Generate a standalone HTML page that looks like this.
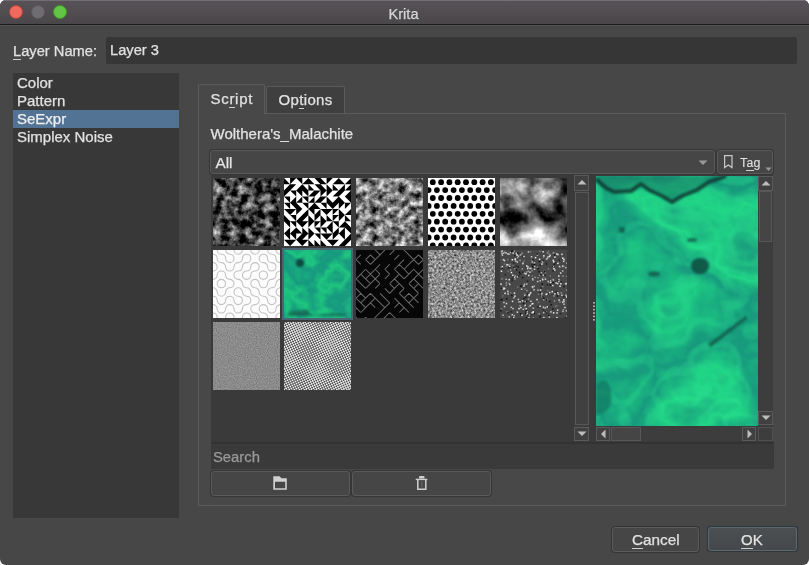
<!DOCTYPE html>
<html><head><meta charset="utf-8">
<style>
*{margin:0;padding:0;box-sizing:border-box}
html,body{width:809px;height:565px;overflow:hidden;background:#fff}
body{font-family:"Liberation Sans",sans-serif;color:#e2e2e2;position:relative}
.a{position:absolute}
#win{will-change:transform;left:0;top:0;width:809px;height:565px;background:#474747;border-radius:6px;overflow:hidden}
#title{left:0;top:0;width:809px;height:25px;background:linear-gradient(#575257,#4a474a);border-bottom:1px solid #1c1c1d;box-shadow:inset 0 1px 0 #726e73,0 1px 0 #515151}
.tl{width:14px;height:14px;border-radius:50%;top:5px}
.t{white-space:nowrap;font-size:15px;line-height:18px;-webkit-text-stroke:0.25px currentColor}
u{text-decoration:none;position:relative}
u:after{content:"";position:absolute;left:0;right:0;bottom:-1px;height:1px;background:#cfcfcf}
.btn{border:1px solid #5a5a5a;border-radius:3px;background:#464646;box-shadow:0 0 0 1px #363636}
.sb{background:#404040;border:1px solid #5a5a5a}
.thumb{width:67px;height:68px}
</style></head><body>
<svg width="0" height="0" style="position:absolute"><defs><filter id="n1" x="0" y="0" width="100%" height="100%" color-interpolation-filters="sRGB"><feTurbulence type="fractalNoise" baseFrequency="0.12" numOctaves="4" seed="3"/><feColorMatrix type="matrix" values="1 0 0 0 0 1 0 0 0 0 1 0 0 0 0 0 0 0 0 1"/><feComponentTransfer><feFuncR type="linear" slope="1.6" intercept="-0.55"/><feFuncG type="linear" slope="1.6" intercept="-0.55"/><feFuncB type="linear" slope="1.6" intercept="-0.55"/></feComponentTransfer></filter><filter id="n3" x="0" y="0" width="100%" height="100%" color-interpolation-filters="sRGB"><feTurbulence type="fractalNoise" baseFrequency="0.14" numOctaves="4" seed="11"/><feColorMatrix type="matrix" values="1 0 0 0 0 1 0 0 0 0 1 0 0 0 0 0 0 0 0 1"/><feComponentTransfer><feFuncR type="linear" slope="1.5" intercept="-0.26"/><feFuncG type="linear" slope="1.5" intercept="-0.26"/><feFuncB type="linear" slope="1.5" intercept="-0.26"/></feComponentTransfer></filter><filter id="n5" x="0" y="0" width="100%" height="100%" color-interpolation-filters="sRGB"><feTurbulence type="fractalNoise" baseFrequency="0.04" numOctaves="5" seed="2"/><feColorMatrix type="matrix" values="1 0 0 0 0 1 0 0 0 0 1 0 0 0 0 0 0 0 0 1"/><feComponentTransfer><feFuncR type="linear" slope="-1.7" intercept="1.33"/><feFuncG type="linear" slope="-1.7" intercept="1.33"/><feFuncB type="linear" slope="-1.7" intercept="1.33"/></feComponentTransfer></filter><filter id="m7" x="0" y="0" width="100%" height="100%" color-interpolation-filters="sRGB">
<feTurbulence type="fractalNoise" baseFrequency="0.03 0.035" numOctaves="4" seed="12"/>
<feColorMatrix type="matrix" values="1 0 0 0 0 1 0 0 0 0 1 0 0 0 0 0 0 0 0 1"/>
<feComponentTransfer><feFuncR type="table" tableValues="0.08 0.09 0.12 0.09 0.1 0.09"/>
<feFuncG type="table" tableValues="0.5 0.6 0.78 0.6 0.68 0.58"/>
<feFuncB type="table" tableValues="0.44 0.5 0.5 0.5 0.5 0.48"/></feComponentTransfer></filter><filter id="n9" x="0" y="0" width="100%" height="100%" color-interpolation-filters="sRGB"><feTurbulence type="fractalNoise" baseFrequency="0.45" numOctaves="3" seed="9"/><feColorMatrix type="matrix" values="1 0 0 0 0 1 0 0 0 0 1 0 0 0 0 0 0 0 0 1"/><feComponentTransfer><feFuncR type="linear" slope="0.9" intercept="0.1"/><feFuncG type="linear" slope="0.9" intercept="0.1"/><feFuncB type="linear" slope="0.9" intercept="0.1"/></feComponentTransfer></filter><filter id="n11" x="0" y="0" width="100%" height="100%" color-interpolation-filters="sRGB"><feTurbulence type="fractalNoise" baseFrequency="0.9" numOctaves="2" seed="4"/><feColorMatrix type="matrix" values="1 0 0 0 0 1 0 0 0 0 1 0 0 0 0 0 0 0 0 1"/><feComponentTransfer><feFuncR type="linear" slope="0.25" intercept="0.42"/><feFuncG type="linear" slope="0.25" intercept="0.42"/><feFuncB type="linear" slope="0.25" intercept="0.42"/></feComponentTransfer></filter><pattern id="p12" width="3.2" height="3.2" patternUnits="userSpaceOnUse" patternTransform="rotate(20)"><rect width="3.2" height="3.2" fill="#f0f0f0"/><rect width="1.6" height="1.6" fill="#505050"/><rect x="1.6" y="1.6" width="1.6" height="1.6" fill="#505050"/></pattern><filter id="mp" x="0" y="0" width="100%" height="100%" color-interpolation-filters="sRGB">
<feTurbulence type="fractalNoise" baseFrequency="0.009 0.011" numOctaves="5" seed="3" result="n"/>
<feColorMatrix in="n" type="matrix" values="1 0 0 0 0 1 0 0 0 0 1 0 0 0 0 0 0 0 0 1" result="g"/>
<feComponentTransfer in="g"><feFuncR type="table" tableValues="0.08 0.1 0.13 0.09 0.12 0.1"/>
<feFuncG type="table" tableValues="0.5 0.62 0.84 0.6 0.8 0.58"/>
<feFuncB type="table" tableValues="0.44 0.49 0.53 0.49 0.52 0.47"/></feComponentTransfer>
</filter>
<filter id="mc" x="0" y="0" width="100%" height="100%" color-interpolation-filters="sRGB">
<feTurbulence type="fractalNoise" baseFrequency="0.009 0.012" numOctaves="3" seed="3" result="n"/>
<feColorMatrix in="n" type="matrix" values="1 0 0 0 0 1 0 0 0 0 1 0 0 0 0 0 0 0 0 1" result="g"/>
<feComponentTransfer in="g"><feFuncR type="discrete" tableValues="0 0 1 0 0 1 0 0 1 0 0 1 0 0 1 0 0 1"/></feComponentTransfer>
<feColorMatrix type="matrix" values="0 0 0 0 0.2  0 0 0 0 0.95  0 0 0 0 0.6  1 0 0 0 -0.5"/>
<feGaussianBlur stdDeviation="0.9"/>
</filter>
<filter id="blur2"><feGaussianBlur stdDeviation="2"/></filter><filter id="blur1"><feGaussianBlur stdDeviation="1.3"/></filter><filter id="blur6"><feGaussianBlur stdDeviation="7"/></filter></defs></svg>
<div id="win" class="a">
  <div id="title" class="a"></div>
  <div class="a tl" style="left:9px;background:#ee6a5f;border:1px solid #b8433b"></div>
  <div class="a tl" style="left:31px;background:#706d72;border:1px solid #5c595e"></div>
  <div class="a tl" style="left:53px;background:#62c545;border:1px solid #3e9a2b"></div>
  <div class="a t" style="left:388.5px;top:4.5px;font-size:14.6px;color:#d6d6d6">Krita</div>

  <div class="a t" style="left:13px;top:41.5px;font-size:14.7px"><u>L</u>ayer Name:</div>
  <div class="a" style="left:106px;top:37px;width:691px;height:27px;background:#363636;border-radius:2px"></div>
  <div class="a t" style="left:110px;top:41px;font-size:14.7px">Layer 3</div>

  <!-- list -->
  <div class="a" style="left:13px;top:73px;width:166px;height:445px;background:#383838"></div>
  <div class="a" style="left:13px;top:110px;width:166px;height:18px;background:#527393"></div>
  <div class="a t" style="left:17px;top:74px;font-size:15px">Color</div>
  <div class="a t" style="left:17px;top:92px;font-size:15px">Pattern</div>
  <div class="a t" style="left:17px;top:110px;font-size:15px;color:#f0f0f0">SeExpr</div>
  <div class="a t" style="left:17px;top:128px;font-size:15px">Simplex Noise</div>

  <!-- tabs & panel -->
  <div class="a" style="left:198px;top:113px;width:588px;height:393px;border:1px solid #5b5b5b;background:#484848"></div>
  <div class="a" style="left:266px;top:86px;width:79px;height:27px;border:1px solid #5b5b5b;border-bottom:none;background:#3f3f3f;border-radius:2px 2px 0 0"></div>
  <div class="a" style="left:198px;top:84px;width:67px;height:30px;border:1px solid #5b5b5b;border-bottom:none;background:#484848;border-radius:2px 2px 0 0"></div>
  <div class="a t" style="left:210.5px;top:89.5px;font-size:15px;letter-spacing:0.7px">Sc<u>r</u>ipt</div>
  <div class="a t" style="left:278.5px;top:91px;font-size:15px;letter-spacing:0.35px">Op<u>t</u>ions</div>

  <div class="a t" style="left:210.5px;top:125px">Wolthera's_Malachite</div>
  <div class="a btn" style="left:210px;top:150px;width:505px;height:24px"></div>
  <div class="a t" style="left:215.5px;top:154px;font-size:15.3px;color:#e6e6e6">All</div>
  <svg class="a" style="left:698px;top:160px" width="10" height="6"><path d="M0.5 0.5H9.5L5 5z" fill="#9a9a9a"/></svg>
  <div class="a btn" style="left:717px;top:150px;width:56px;height:24px"></div>

  <svg class="a" style="left:723px;top:154px" width="11" height="15"><path d="M1.6 1.6H9V13.6L5.3 11 1.6 13.6Z" fill="none" stroke="#c8c8c8" stroke-width="1.2"/></svg>
  <div class="a t" style="left:740px;top:154px;font-size:12.3px;-webkit-text-stroke:0.1px;letter-spacing:0.3px">T<u style="opacity:1">a</u>g</div>
  <svg class="a" style="left:765px;top:167px" width="7" height="5"><path d="M0.5 0.5H6.5L3.5 4z" fill="#9a9a9a"/></svg>
  <!-- grid area -->
  <div class="a" style="left:211px;top:175px;width:562px;height:267px;background:#3a3a3a"></div>


  <svg class="a" style="left:213px;top:178px" width="67" height="68" viewBox="0 0 67 68"><rect width="67" height="68" fill="#555" filter="url(#n1)"/></svg><svg class="a" style="left:284px;top:178px" width="67" height="68" viewBox="0 0 67 68"><rect width="67" height="68" fill="#fff"/><path d="M6.1 6.2 0 6.2 0 0ZM6.1 6.2 6.1 12.4 0 12.4ZM0 18.5 0 12.4 6.1 12.4ZM0 18.5 6.1 18.5 6.1 24.7ZM0 24.7 6.1 24.7 6.1 30.9ZM0 30.9 6.1 30.9 6.1 37.1ZM6.1 43.3 0 43.3 0 37.1ZM0 43.3 6.1 43.3 6.1 49.5ZM6.1 49.5 6.1 55.6 0 55.6ZM0 55.6 6.1 55.6 6.1 61.8ZM0 61.8 6.1 61.8 6.1 68ZM6.1 6.2 6.1 0 12.2 0ZM6.1 12.4 6.1 6.2 12.2 6.2ZM6.1 12.4 12.2 12.4 12.2 18.5ZM12.2 18.5 12.2 24.7 6.1 24.7ZM6.1 24.7 12.2 24.7 12.2 30.9ZM6.1 37.1 6.1 30.9 12.2 30.9ZM6.1 37.1 12.2 37.1 12.2 43.3ZM6.1 43.3 12.2 43.3 12.2 49.5ZM12.2 49.5 12.2 55.6 6.1 55.6ZM6.1 55.6 12.2 55.6 12.2 61.8ZM6.1 68 6.1 61.8 12.2 61.8ZM12.2 0 18.3 0 18.3 6.2ZM18.3 6.2 18.3 12.4 12.2 12.4ZM12.2 12.4 18.3 12.4 18.3 18.5ZM18.3 18.5 18.3 24.7 12.2 24.7ZM18.3 30.9 12.2 30.9 12.2 24.7ZM12.2 37.1 12.2 30.9 18.3 30.9ZM18.3 37.1 18.3 43.3 12.2 43.3ZM12.2 43.3 18.3 43.3 18.3 49.5ZM18.3 55.6 12.2 55.6 12.2 49.5ZM18.3 55.6 18.3 61.8 12.2 61.8ZM12.2 61.8 18.3 61.8 18.3 68ZM24.4 0 24.4 6.2 18.3 6.2ZM24.4 12.4 18.3 12.4 18.3 6.2ZM18.3 12.4 24.4 12.4 24.4 18.5ZM18.3 18.5 24.4 18.5 24.4 24.7ZM18.3 24.7 24.4 24.7 24.4 30.9ZM24.4 30.9 24.4 37.1 18.3 37.1ZM18.3 43.3 18.3 37.1 24.4 37.1ZM18.3 49.5 18.3 43.3 24.4 43.3ZM24.4 55.6 18.3 55.6 18.3 49.5ZM18.3 61.8 18.3 55.6 24.4 55.6ZM18.3 68 18.3 61.8 24.4 61.8ZM30.5 6.2 24.4 6.2 24.4 0ZM30.5 12.4 24.4 12.4 24.4 6.2ZM30.5 12.4 30.5 18.5 24.4 18.5ZM30.5 18.5 30.5 24.7 24.4 24.7ZM30.5 24.7 30.5 30.9 24.4 30.9ZM24.4 30.9 30.5 30.9 30.5 37.1ZM30.5 43.3 24.4 43.3 24.4 37.1ZM24.4 49.5 24.4 43.3 30.5 43.3ZM30.5 55.6 24.4 55.6 24.4 49.5ZM24.4 61.8 24.4 55.6 30.5 55.6ZM30.5 68 24.4 68 24.4 61.8ZM30.5 0 36.5 0 36.5 6.2ZM30.5 6.2 36.5 6.2 36.5 12.4ZM30.5 18.5 30.5 12.4 36.5 12.4ZM36.5 18.5 36.5 24.7 30.5 24.7ZM36.5 30.9 30.5 30.9 30.5 24.7ZM36.5 30.9 36.5 37.1 30.5 37.1ZM30.5 43.3 30.5 37.1 36.5 37.1ZM30.5 49.5 30.5 43.3 36.5 43.3ZM30.5 49.5 36.5 49.5 36.5 55.6ZM30.5 55.6 36.5 55.6 36.5 61.8ZM36.5 68 30.5 68 30.5 61.8ZM42.6 6.2 36.5 6.2 36.5 0ZM42.6 12.4 36.5 12.4 36.5 6.2ZM36.5 18.5 36.5 12.4 42.6 12.4ZM36.5 24.7 36.5 18.5 42.6 18.5ZM36.5 24.7 42.6 24.7 42.6 30.9ZM36.5 30.9 42.6 30.9 42.6 37.1ZM42.6 43.3 36.5 43.3 36.5 37.1ZM36.5 49.5 36.5 43.3 42.6 43.3ZM36.5 49.5 42.6 49.5 42.6 55.6ZM36.5 55.6 42.6 55.6 42.6 61.8ZM42.6 68 36.5 68 36.5 61.8ZM42.6 6.2 42.6 0 48.7 0ZM48.7 12.4 42.6 12.4 42.6 6.2ZM42.6 18.5 42.6 12.4 48.7 12.4ZM48.7 24.7 42.6 24.7 42.6 18.5ZM42.6 24.7 48.7 24.7 48.7 30.9ZM42.6 37.1 42.6 30.9 48.7 30.9ZM48.7 43.3 42.6 43.3 42.6 37.1ZM48.7 43.3 48.7 49.5 42.6 49.5ZM42.6 49.5 48.7 49.5 48.7 55.6ZM42.6 61.8 42.6 55.6 48.7 55.6ZM42.6 61.8 48.7 61.8 48.7 68ZM54.8 0 54.8 6.2 48.7 6.2ZM54.8 12.4 48.7 12.4 48.7 6.2ZM54.8 12.4 54.8 18.5 48.7 18.5ZM54.8 18.5 54.8 24.7 48.7 24.7ZM48.7 30.9 48.7 24.7 54.8 24.7ZM48.7 37.1 48.7 30.9 54.8 30.9ZM48.7 43.3 48.7 37.1 54.8 37.1ZM48.7 43.3 54.8 43.3 54.8 49.5ZM54.8 49.5 54.8 55.6 48.7 55.6ZM48.7 61.8 48.7 55.6 54.8 55.6ZM48.7 68 48.7 61.8 54.8 61.8ZM60.9 6.2 54.8 6.2 54.8 0ZM60.9 6.2 60.9 12.4 54.8 12.4ZM54.8 18.5 54.8 12.4 60.9 12.4ZM60.9 24.7 54.8 24.7 54.8 18.5ZM54.8 30.9 54.8 24.7 60.9 24.7ZM60.9 37.1 54.8 37.1 54.8 30.9ZM54.8 43.3 54.8 37.1 60.9 37.1ZM60.9 43.3 60.9 49.5 54.8 49.5ZM60.9 49.5 60.9 55.6 54.8 55.6ZM54.8 55.6 60.9 55.6 60.9 61.8ZM60.9 61.8 60.9 68 54.8 68ZM67 0 67 6.2 60.9 6.2ZM67 6.2 67 12.4 60.9 12.4ZM67 12.4 67 18.5 60.9 18.5ZM60.9 18.5 67 18.5 67 24.7ZM60.9 30.9 60.9 24.7 67 24.7ZM67 30.9 67 37.1 60.9 37.1ZM67 43.3 60.9 43.3 60.9 37.1ZM67 49.5 60.9 49.5 60.9 43.3ZM60.9 49.5 67 49.5 67 55.6ZM67 55.6 67 61.8 60.9 61.8ZM60.9 68 60.9 61.8 67 61.8Z" fill="#000"/></svg><svg class="a" style="left:356px;top:178px" width="67" height="68" viewBox="0 0 67 68"><rect width="67" height="68" fill="#777" filter="url(#n3)"/></svg><svg class="a" style="left:428px;top:178px" width="67" height="68" viewBox="0 0 67 68"><rect width="67" height="68" fill="#fff"/><circle cx="-3.5" cy="4.2" r="2.9"/><circle cx="4.8" cy="4.2" r="2.9"/><circle cx="13.1" cy="4.2" r="2.9"/><circle cx="21.4" cy="4.2" r="2.9"/><circle cx="29.7" cy="4.2" r="2.9"/><circle cx="38" cy="4.2" r="2.9"/><circle cx="46.3" cy="4.2" r="2.9"/><circle cx="54.6" cy="4.2" r="2.9"/><circle cx="62.9" cy="4.2" r="2.9"/><circle cx="0.6" cy="12.1" r="2.9"/><circle cx="8.9" cy="12.1" r="2.9"/><circle cx="17.2" cy="12.1" r="2.9"/><circle cx="25.6" cy="12.1" r="2.9"/><circle cx="33.9" cy="12.1" r="2.9"/><circle cx="42.2" cy="12.1" r="2.9"/><circle cx="50.5" cy="12.1" r="2.9"/><circle cx="58.8" cy="12.1" r="2.9"/><circle cx="67.1" cy="12.1" r="2.9"/><circle cx="-3.5" cy="20" r="2.9"/><circle cx="4.8" cy="20" r="2.9"/><circle cx="13.1" cy="20" r="2.9"/><circle cx="21.4" cy="20" r="2.9"/><circle cx="29.7" cy="20" r="2.9"/><circle cx="38" cy="20" r="2.9"/><circle cx="46.3" cy="20" r="2.9"/><circle cx="54.6" cy="20" r="2.9"/><circle cx="62.9" cy="20" r="2.9"/><circle cx="0.6" cy="27.9" r="2.9"/><circle cx="8.9" cy="27.9" r="2.9"/><circle cx="17.2" cy="27.9" r="2.9"/><circle cx="25.6" cy="27.9" r="2.9"/><circle cx="33.9" cy="27.9" r="2.9"/><circle cx="42.2" cy="27.9" r="2.9"/><circle cx="50.5" cy="27.9" r="2.9"/><circle cx="58.8" cy="27.9" r="2.9"/><circle cx="67.1" cy="27.9" r="2.9"/><circle cx="-3.5" cy="35.8" r="2.9"/><circle cx="4.8" cy="35.8" r="2.9"/><circle cx="13.1" cy="35.8" r="2.9"/><circle cx="21.4" cy="35.8" r="2.9"/><circle cx="29.7" cy="35.8" r="2.9"/><circle cx="38" cy="35.8" r="2.9"/><circle cx="46.3" cy="35.8" r="2.9"/><circle cx="54.6" cy="35.8" r="2.9"/><circle cx="62.9" cy="35.8" r="2.9"/><circle cx="0.6" cy="43.7" r="2.9"/><circle cx="8.9" cy="43.7" r="2.9"/><circle cx="17.2" cy="43.7" r="2.9"/><circle cx="25.6" cy="43.7" r="2.9"/><circle cx="33.9" cy="43.7" r="2.9"/><circle cx="42.2" cy="43.7" r="2.9"/><circle cx="50.5" cy="43.7" r="2.9"/><circle cx="58.8" cy="43.7" r="2.9"/><circle cx="67.1" cy="43.7" r="2.9"/><circle cx="-3.5" cy="51.6" r="2.9"/><circle cx="4.8" cy="51.6" r="2.9"/><circle cx="13.1" cy="51.6" r="2.9"/><circle cx="21.4" cy="51.6" r="2.9"/><circle cx="29.7" cy="51.6" r="2.9"/><circle cx="38" cy="51.6" r="2.9"/><circle cx="46.3" cy="51.6" r="2.9"/><circle cx="54.6" cy="51.6" r="2.9"/><circle cx="62.9" cy="51.6" r="2.9"/><circle cx="0.6" cy="59.5" r="2.9"/><circle cx="8.9" cy="59.5" r="2.9"/><circle cx="17.2" cy="59.5" r="2.9"/><circle cx="25.6" cy="59.5" r="2.9"/><circle cx="33.9" cy="59.5" r="2.9"/><circle cx="42.2" cy="59.5" r="2.9"/><circle cx="50.5" cy="59.5" r="2.9"/><circle cx="58.8" cy="59.5" r="2.9"/><circle cx="67.1" cy="59.5" r="2.9"/><circle cx="-3.5" cy="67.4" r="2.9"/><circle cx="4.8" cy="67.4" r="2.9"/><circle cx="13.1" cy="67.4" r="2.9"/><circle cx="21.4" cy="67.4" r="2.9"/><circle cx="29.7" cy="67.4" r="2.9"/><circle cx="38" cy="67.4" r="2.9"/><circle cx="46.3" cy="67.4" r="2.9"/><circle cx="54.6" cy="67.4" r="2.9"/><circle cx="62.9" cy="67.4" r="2.9"/></svg><svg class="a" style="left:500px;top:178px" width="67" height="68" viewBox="0 0 67 68"><rect width="67" height="68" fill="#777" filter="url(#n5)"/></svg><svg class="a" style="left:213px;top:250px" width="67" height="68" viewBox="0 0 67 68"><rect width="67" height="68" fill="#fcfcfc"/><path d="M4.2 0A4.2 4.2 0 0 0 8.4 4.2M0 4.2A4.2 4.2 0 0 1 4.2 8.4M4.2 8.4A4.2 4.2 0 0 0 8.4 12.6M0 12.6A4.2 4.2 0 0 1 4.2 16.8M4.2 16.8A4.2 4.2 0 0 1 0 21M8.4 21A4.2 4.2 0 0 0 4.2 25.2M4.2 25.2A4.2 4.2 0 0 1 0 29.4M8.4 29.4A4.2 4.2 0 0 0 4.2 33.6M4.2 33.6A4.2 4.2 0 0 0 8.4 37.8M0 37.8A4.2 4.2 0 0 1 4.2 42M4.2 42A4.2 4.2 0 0 0 8.4 46.2M0 46.2A4.2 4.2 0 0 1 4.2 50.4M4.2 50.4A4.2 4.2 0 0 0 8.4 54.6M0 54.6A4.2 4.2 0 0 1 4.2 58.8M4.2 58.8A4.2 4.2 0 0 0 8.4 63M0 63A4.2 4.2 0 0 1 4.2 67.2M4.2 67.2A4.2 4.2 0 0 1 0 71.4M8.4 71.4A4.2 4.2 0 0 0 4.2 75.6M12.6 0A4.2 4.2 0 0 0 16.8 4.2M8.4 4.2A4.2 4.2 0 0 1 12.6 8.4M12.6 8.4A4.2 4.2 0 0 0 16.8 12.6M8.4 12.6A4.2 4.2 0 0 1 12.6 16.8M12.6 16.8A4.2 4.2 0 0 0 16.8 21M8.4 21A4.2 4.2 0 0 1 12.6 25.2M12.6 25.2A4.2 4.2 0 0 0 16.8 29.4M8.4 29.4A4.2 4.2 0 0 1 12.6 33.6M12.6 33.6A4.2 4.2 0 0 1 8.4 37.8M16.8 37.8A4.2 4.2 0 0 0 12.6 42M12.6 42A4.2 4.2 0 0 1 8.4 46.2M16.8 46.2A4.2 4.2 0 0 0 12.6 50.4M12.6 50.4A4.2 4.2 0 0 1 8.4 54.6M16.8 54.6A4.2 4.2 0 0 0 12.6 58.8M12.6 58.8A4.2 4.2 0 0 1 8.4 63M16.8 63A4.2 4.2 0 0 0 12.6 67.2M12.6 67.2A4.2 4.2 0 0 1 8.4 71.4M16.8 71.4A4.2 4.2 0 0 0 12.6 75.6M21 0A4.2 4.2 0 0 0 25.2 4.2M16.8 4.2A4.2 4.2 0 0 1 21 8.4M21 8.4A4.2 4.2 0 0 1 16.8 12.6M25.2 12.6A4.2 4.2 0 0 0 21 16.8M21 16.8A4.2 4.2 0 0 1 16.8 21M25.2 21A4.2 4.2 0 0 0 21 25.2M21 25.2A4.2 4.2 0 0 0 25.2 29.4M16.8 29.4A4.2 4.2 0 0 1 21 33.6M21 33.6A4.2 4.2 0 0 1 16.8 37.8M25.2 37.8A4.2 4.2 0 0 0 21 42M21 42A4.2 4.2 0 0 0 25.2 46.2M16.8 46.2A4.2 4.2 0 0 1 21 50.4M21 50.4A4.2 4.2 0 0 0 25.2 54.6M16.8 54.6A4.2 4.2 0 0 1 21 58.8M21 58.8A4.2 4.2 0 0 0 25.2 63M16.8 63A4.2 4.2 0 0 1 21 67.2M21 67.2A4.2 4.2 0 0 0 25.2 71.4M16.8 71.4A4.2 4.2 0 0 1 21 75.6M29.4 0A4.2 4.2 0 0 1 25.2 4.2M33.6 4.2A4.2 4.2 0 0 0 29.4 8.4M29.4 8.4A4.2 4.2 0 0 1 25.2 12.6M33.6 12.6A4.2 4.2 0 0 0 29.4 16.8M29.4 16.8A4.2 4.2 0 0 1 25.2 21M33.6 21A4.2 4.2 0 0 0 29.4 25.2M29.4 25.2A4.2 4.2 0 0 0 33.6 29.4M25.2 29.4A4.2 4.2 0 0 1 29.4 33.6M29.4 33.6A4.2 4.2 0 0 0 33.6 37.8M25.2 37.8A4.2 4.2 0 0 1 29.4 42M29.4 42A4.2 4.2 0 0 0 33.6 46.2M25.2 46.2A4.2 4.2 0 0 1 29.4 50.4M29.4 50.4A4.2 4.2 0 0 1 25.2 54.6M33.6 54.6A4.2 4.2 0 0 0 29.4 58.8M29.4 58.8A4.2 4.2 0 0 1 25.2 63M33.6 63A4.2 4.2 0 0 0 29.4 67.2M29.4 67.2A4.2 4.2 0 0 1 25.2 71.4M33.6 71.4A4.2 4.2 0 0 0 29.4 75.6M37.8 0A4.2 4.2 0 0 0 42 4.2M33.6 4.2A4.2 4.2 0 0 1 37.8 8.4M37.8 8.4A4.2 4.2 0 0 1 33.6 12.6M42 12.6A4.2 4.2 0 0 0 37.8 16.8M37.8 16.8A4.2 4.2 0 0 1 33.6 21M42 21A4.2 4.2 0 0 0 37.8 25.2M37.8 25.2A4.2 4.2 0 0 1 33.6 29.4M42 29.4A4.2 4.2 0 0 0 37.8 33.6M37.8 33.6A4.2 4.2 0 0 0 42 37.8M33.6 37.8A4.2 4.2 0 0 1 37.8 42M37.8 42A4.2 4.2 0 0 0 42 46.2M33.6 46.2A4.2 4.2 0 0 1 37.8 50.4M37.8 50.4A4.2 4.2 0 0 1 33.6 54.6M42 54.6A4.2 4.2 0 0 0 37.8 58.8M37.8 58.8A4.2 4.2 0 0 0 42 63M33.6 63A4.2 4.2 0 0 1 37.8 67.2M37.8 67.2A4.2 4.2 0 0 0 42 71.4M33.6 71.4A4.2 4.2 0 0 1 37.8 75.6M46.2 0A4.2 4.2 0 0 1 42 4.2M50.4 4.2A4.2 4.2 0 0 0 46.2 8.4M46.2 8.4A4.2 4.2 0 0 0 50.4 12.6M42 12.6A4.2 4.2 0 0 1 46.2 16.8M46.2 16.8A4.2 4.2 0 0 1 42 21M50.4 21A4.2 4.2 0 0 0 46.2 25.2M46.2 25.2A4.2 4.2 0 0 0 50.4 29.4M42 29.4A4.2 4.2 0 0 1 46.2 33.6M46.2 33.6A4.2 4.2 0 0 0 50.4 37.8M42 37.8A4.2 4.2 0 0 1 46.2 42M46.2 42A4.2 4.2 0 0 0 50.4 46.2M42 46.2A4.2 4.2 0 0 1 46.2 50.4M46.2 50.4A4.2 4.2 0 0 1 42 54.6M50.4 54.6A4.2 4.2 0 0 0 46.2 58.8M46.2 58.8A4.2 4.2 0 0 0 50.4 63M42 63A4.2 4.2 0 0 1 46.2 67.2M46.2 67.2A4.2 4.2 0 0 1 42 71.4M50.4 71.4A4.2 4.2 0 0 0 46.2 75.6M54.6 0A4.2 4.2 0 0 0 58.8 4.2M50.4 4.2A4.2 4.2 0 0 1 54.6 8.4M54.6 8.4A4.2 4.2 0 0 0 58.8 12.6M50.4 12.6A4.2 4.2 0 0 1 54.6 16.8M54.6 16.8A4.2 4.2 0 0 0 58.8 21M50.4 21A4.2 4.2 0 0 1 54.6 25.2M54.6 25.2A4.2 4.2 0 0 1 50.4 29.4M58.8 29.4A4.2 4.2 0 0 0 54.6 33.6M54.6 33.6A4.2 4.2 0 0 1 50.4 37.8M58.8 37.8A4.2 4.2 0 0 0 54.6 42M54.6 42A4.2 4.2 0 0 0 58.8 46.2M50.4 46.2A4.2 4.2 0 0 1 54.6 50.4M54.6 50.4A4.2 4.2 0 0 0 58.8 54.6M50.4 54.6A4.2 4.2 0 0 1 54.6 58.8M54.6 58.8A4.2 4.2 0 0 0 58.8 63M50.4 63A4.2 4.2 0 0 1 54.6 67.2M54.6 67.2A4.2 4.2 0 0 0 58.8 71.4M50.4 71.4A4.2 4.2 0 0 1 54.6 75.6M63 0A4.2 4.2 0 0 0 67.2 4.2M58.8 4.2A4.2 4.2 0 0 1 63 8.4M63 8.4A4.2 4.2 0 0 0 67.2 12.6M58.8 12.6A4.2 4.2 0 0 1 63 16.8M63 16.8A4.2 4.2 0 0 1 58.8 21M67.2 21A4.2 4.2 0 0 0 63 25.2M63 25.2A4.2 4.2 0 0 1 58.8 29.4M67.2 29.4A4.2 4.2 0 0 0 63 33.6M63 33.6A4.2 4.2 0 0 1 58.8 37.8M67.2 37.8A4.2 4.2 0 0 0 63 42M63 42A4.2 4.2 0 0 0 67.2 46.2M58.8 46.2A4.2 4.2 0 0 1 63 50.4M63 50.4A4.2 4.2 0 0 1 58.8 54.6M67.2 54.6A4.2 4.2 0 0 0 63 58.8M63 58.8A4.2 4.2 0 0 1 58.8 63M67.2 63A4.2 4.2 0 0 0 63 67.2M63 67.2A4.2 4.2 0 0 0 67.2 71.4M58.8 71.4A4.2 4.2 0 0 1 63 75.6M71.4 0A4.2 4.2 0 0 0 75.6 4.2M67.2 4.2A4.2 4.2 0 0 1 71.4 8.4M71.4 8.4A4.2 4.2 0 0 0 75.6 12.6M67.2 12.6A4.2 4.2 0 0 1 71.4 16.8M71.4 16.8A4.2 4.2 0 0 1 67.2 21M75.6 21A4.2 4.2 0 0 0 71.4 25.2M71.4 25.2A4.2 4.2 0 0 1 67.2 29.4M75.6 29.4A4.2 4.2 0 0 0 71.4 33.6M71.4 33.6A4.2 4.2 0 0 0 75.6 37.8M67.2 37.8A4.2 4.2 0 0 1 71.4 42M71.4 42A4.2 4.2 0 0 1 67.2 46.2M75.6 46.2A4.2 4.2 0 0 0 71.4 50.4M71.4 50.4A4.2 4.2 0 0 0 75.6 54.6M67.2 54.6A4.2 4.2 0 0 1 71.4 58.8M71.4 58.8A4.2 4.2 0 0 0 75.6 63M67.2 63A4.2 4.2 0 0 1 71.4 67.2M71.4 67.2A4.2 4.2 0 0 1 67.2 71.4M75.6 71.4A4.2 4.2 0 0 0 71.4 75.6" fill="none" stroke="#c2c2c2" stroke-width="1.1"/></svg><svg class="a" style="left:284px;top:250px" width="67" height="68" viewBox="0 0 67 68"><rect width="67" height="68" filter="url(#m7)"/><g filter="url(#blur1)" fill="#0c4a40"><ellipse cx="16" cy="13" rx="4" ry="4"/><path d="M4 64C8 58 14 62 20 60 26 58 24 64 30 66 38 64 50 62 62 64V66H4Z" opacity="0.6"/></g></svg><svg class="a" style="left:356px;top:250px" width="67" height="68" viewBox="0 0 67 68"><rect width="67" height="68" fill="#070707"/><path transform="rotate(45)" d="M-6.8 -40.8v6.8M-6.8 -34h6.8M-6.8 -34v6.8M-6.8 -27.2h6.8M-6.8 -27.2v6.8M-6.8 -13.6h6.8M-6.8 -6.8h6.8M-6.8 0v6.8M-6.8 6.8h6.8M-6.8 13.6h6.8M-6.8 20.4h6.8M-6.8 27.2h6.8M-6.8 34v6.8M-6.8 40.8v6.8M-6.8 47.6h6.8M0 -40.8h6.8M0 -40.8v6.8M0 -34h6.8M0 -27.2v6.8M0 -20.4h6.8M0 -13.6h6.8M0 -13.6v6.8M0 -6.8h6.8M0 0v6.8M0 6.8v6.8M0 13.6v6.8M0 20.4v6.8M0 27.2h6.8M0 27.2v6.8M0 34v6.8M0 40.8h6.8M0 47.6h6.8M6.8 -34v6.8M6.8 -20.4h6.8M6.8 -20.4v6.8M6.8 -13.6h6.8M6.8 0v6.8M6.8 6.8h6.8M6.8 13.6h6.8M6.8 13.6v6.8M6.8 20.4v6.8M6.8 27.2h6.8M6.8 34v6.8M6.8 40.8h6.8M6.8 40.8v6.8M6.8 47.6h6.8M6.8 47.6v6.8M13.6 -40.8h6.8M13.6 -34h6.8M13.6 -34v6.8M13.6 -20.4h6.8M13.6 -20.4v6.8M13.6 -13.6h6.8M13.6 -6.8h6.8M13.6 -6.8v6.8M13.6 0h6.8M13.6 13.6v6.8M13.6 20.4h6.8M13.6 20.4v6.8M13.6 27.2h6.8M13.6 27.2v6.8M13.6 34v6.8M13.6 40.8h6.8M13.6 40.8v6.8M13.6 47.6h6.8M20.4 -34h6.8M20.4 -34v6.8M20.4 -27.2h6.8M20.4 -27.2v6.8M20.4 -20.4v6.8M20.4 -13.6v6.8M20.4 -6.8v6.8M20.4 6.8h6.8M20.4 6.8v6.8M20.4 13.6h6.8M20.4 13.6v6.8M20.4 20.4h6.8M20.4 20.4v6.8M20.4 27.2h6.8M20.4 34h6.8M20.4 34v6.8M20.4 40.8h6.8M20.4 47.6h6.8M27.2 -40.8h6.8M27.2 -34h6.8M27.2 -34v6.8M27.2 -27.2v6.8M27.2 -6.8v6.8M27.2 0h6.8M27.2 0v6.8M27.2 6.8h6.8M27.2 6.8v6.8M27.2 13.6h6.8M27.2 20.4h6.8M27.2 27.2h6.8M27.2 27.2v6.8M27.2 34h6.8M27.2 34v6.8M27.2 40.8v6.8M27.2 47.6h6.8M27.2 47.6v6.8M34 -40.8h6.8M34 -34h6.8M34 -27.2v6.8M34 -13.6v6.8M34 -6.8h6.8M34 0v6.8M34 6.8h6.8M34 6.8v6.8M34 13.6v6.8M34 27.2h6.8M34 27.2v6.8M34 34h6.8M34 40.8h6.8M34 40.8v6.8M34 47.6h6.8M40.8 -34h6.8M40.8 -27.2v6.8M40.8 -20.4h6.8M40.8 -20.4v6.8M40.8 -13.6h6.8M40.8 -6.8v6.8M40.8 6.8v6.8M40.8 20.4h6.8M40.8 20.4v6.8M40.8 27.2v6.8M40.8 34h6.8M40.8 40.8h6.8M40.8 47.6h6.8M40.8 47.6v6.8M47.6 -40.8h6.8M47.6 -40.8v6.8M47.6 -34h6.8M47.6 -34v6.8M47.6 -27.2v6.8M47.6 -20.4h6.8M47.6 -13.6h6.8M47.6 -13.6v6.8M47.6 -6.8h6.8M47.6 -6.8v6.8M47.6 0h6.8M47.6 6.8h6.8M47.6 13.6h6.8M47.6 20.4h6.8M47.6 20.4v6.8M47.6 27.2h6.8M47.6 27.2v6.8M47.6 34v6.8M47.6 47.6h6.8M54.4 -40.8v6.8M54.4 -27.2h6.8M54.4 -27.2v6.8M54.4 -20.4v6.8M54.4 -6.8h6.8M54.4 -6.8v6.8M54.4 0v6.8M54.4 13.6h6.8M54.4 20.4h6.8M54.4 40.8h6.8M54.4 40.8v6.8M61.2 -40.8h6.8M61.2 -40.8v6.8M61.2 -34h6.8M61.2 -34v6.8M61.2 -27.2h6.8M61.2 -27.2v6.8M61.2 -20.4h6.8M61.2 -20.4v6.8M61.2 -13.6h6.8M61.2 -6.8v6.8M61.2 0h6.8M61.2 6.8h6.8M61.2 13.6v6.8M61.2 20.4v6.8M61.2 27.2v6.8M61.2 34v6.8M61.2 40.8v6.8M61.2 47.6h6.8M68 -40.8h6.8M68 -40.8v6.8M68 -34h6.8M68 -20.4h6.8M68 -20.4v6.8M68 -13.6h6.8M68 -6.8h6.8M68 -6.8v6.8M68 0h6.8M68 6.8h6.8M68 6.8v6.8M68 20.4h6.8M68 20.4v6.8M68 27.2h6.8M68 27.2v6.8M68 34h6.8M68 34v6.8M68 40.8h6.8M68 47.6v6.8M74.8 -34h6.8M74.8 -34v6.8M74.8 -27.2v6.8M74.8 -20.4h6.8M74.8 -13.6v6.8M74.8 -6.8h6.8M74.8 -6.8v6.8M74.8 0h6.8M74.8 6.8h6.8M74.8 6.8v6.8M74.8 20.4h6.8M74.8 27.2h6.8M74.8 27.2v6.8M74.8 34h6.8M74.8 34v6.8M74.8 40.8h6.8M74.8 40.8v6.8M74.8 47.6h6.8" stroke="#6a6a6a" stroke-width="1" fill="none"/></svg><svg class="a" style="left:428px;top:250px" width="67" height="68" viewBox="0 0 67 68"><rect width="67" height="68" filter="url(#n9)"/></svg><svg class="a" style="left:500px;top:250px" width="67" height="68" viewBox="0 0 67 68"><rect width="67" height="68" fill="#484848"/><rect x="13.1" y="0.8" width="1.5" height="1.5" fill="#222"/><rect x="17" y="4.4" width="1.5" height="1.5" fill="#777"/><rect x="66.9" y="40.1" width="1.5" height="1.5" fill="#ccc"/><rect x="62" y="51.4" width="1.5" height="1.5" fill="#ddd"/><rect x="18.8" y="3.5" width="1.5" height="1.5" fill="#222"/><rect x="42.5" y="10.1" width="1.5" height="1.5" fill="#222"/><rect x="29.2" y="21.5" width="1.5" height="1.5" fill="#ccc"/><rect x="52.6" y="29.1" width="1.5" height="1.5" fill="#ddd"/><rect x="54.4" y="42.9" width="1.5" height="1.5" fill="#111"/><rect x="48.2" y="3.4" width="1.5" height="1.5" fill="#777"/><rect x="30.2" y="51.2" width="1.5" height="1.5" fill="#222"/><rect x="32.5" y="62" width="1.5" height="1.5" fill="#999"/><rect x="11.4" y="28.2" width="1.5" height="1.5" fill="#222"/><rect x="20" y="50.3" width="1.5" height="1.5" fill="#222"/><rect x="27.2" y="16.2" width="1.5" height="1.5" fill="#eee"/><rect x="37.3" y="26.8" width="1.5" height="1.5" fill="#999"/><rect x="43.1" y="5.1" width="1.5" height="1.5" fill="#eee"/><rect x="36.9" y="30.8" width="1.5" height="1.5" fill="#ccc"/><rect x="66.8" y="30.6" width="1.5" height="1.5" fill="#999"/><rect x="36.7" y="16.6" width="1.5" height="1.5" fill="#999"/><rect x="22.9" y="6.2" width="1.5" height="1.5" fill="#111"/><rect x="24.7" y="55" width="1.5" height="1.5" fill="#111"/><rect x="59.4" y="51" width="1.5" height="1.5" fill="#777"/><rect x="25.7" y="50.7" width="1.5" height="1.5" fill="#111"/><rect x="25.3" y="23" width="1.5" height="1.5" fill="#ddd"/><rect x="33.4" y="39.1" width="1.5" height="1.5" fill="#ccc"/><rect x="8.4" y="34.2" width="1.5" height="1.5" fill="#111"/><rect x="6.2" y="61" width="1.5" height="1.5" fill="#777"/><rect x="26.8" y="30.3" width="1.5" height="1.5" fill="#222"/><rect x="56.9" y="59.4" width="1.5" height="1.5" fill="#ddd"/><rect x="8.5" y="28.9" width="1.5" height="1.5" fill="#eee"/><rect x="64.9" y="33.3" width="1.5" height="1.5" fill="#bbb"/><rect x="26.2" y="63" width="1.5" height="1.5" fill="#eee"/><rect x="65.1" y="16.9" width="1.5" height="1.5" fill="#bbb"/><rect x="15" y="10.3" width="1.5" height="1.5" fill="#bbb"/><rect x="63.1" y="49.1" width="1.5" height="1.5" fill="#eee"/><rect x="5.7" y="52.8" width="1.5" height="1.5" fill="#ddd"/><rect x="52.4" y="15.8" width="1.5" height="1.5" fill="#ddd"/><rect x="43.2" y="20.7" width="1.5" height="1.5" fill="#999"/><rect x="42" y="35.9" width="1.5" height="1.5" fill="#777"/><rect x="46.8" y="7.6" width="1.5" height="1.5" fill="#bbb"/><rect x="20.1" y="64.2" width="1.5" height="1.5" fill="#111"/><rect x="26" y="15.2" width="1.5" height="1.5" fill="#ddd"/><rect x="0.7" y="20.5" width="1.5" height="1.5" fill="#eee"/><rect x="18.7" y="21.5" width="1.5" height="1.5" fill="#111"/><rect x="31.8" y="16" width="1.5" height="1.5" fill="#111"/><rect x="2" y="28" width="1.5" height="1.5" fill="#222"/><rect x="3.7" y="13.2" width="1.5" height="1.5" fill="#777"/><rect x="5.4" y="15.5" width="1.5" height="1.5" fill="#777"/><rect x="62" y="15.4" width="1.5" height="1.5" fill="#ddd"/><rect x="46.6" y="48.8" width="1.5" height="1.5" fill="#ccc"/><rect x="45.7" y="13.5" width="1.5" height="1.5" fill="#222"/><rect x="49.5" y="34.3" width="1.5" height="1.5" fill="#111"/><rect x="33.2" y="13.6" width="1.5" height="1.5" fill="#111"/><rect x="15.5" y="15.1" width="1.5" height="1.5" fill="#222"/><rect x="7.3" y="42.4" width="1.5" height="1.5" fill="#999"/><rect x="60.1" y="33" width="1.5" height="1.5" fill="#ddd"/><rect x="63.6" y="10" width="1.5" height="1.5" fill="#777"/><rect x="3.6" y="1.6" width="1.5" height="1.5" fill="#999"/><rect x="27.8" y="48.3" width="1.5" height="1.5" fill="#999"/><rect x="26.4" y="61.1" width="1.5" height="1.5" fill="#ccc"/><rect x="49.1" y="67.8" width="1.5" height="1.5" fill="#999"/><rect x="22.1" y="12.6" width="1.5" height="1.5" fill="#eee"/><rect x="2.1" y="45.2" width="1.5" height="1.5" fill="#777"/><rect x="56.2" y="67" width="1.5" height="1.5" fill="#eee"/><rect x="11.3" y="0.2" width="1.5" height="1.5" fill="#222"/><rect x="5.4" y="28.6" width="1.5" height="1.5" fill="#bbb"/><rect x="37.6" y="51.6" width="1.5" height="1.5" fill="#777"/><rect x="23.9" y="55.9" width="1.5" height="1.5" fill="#777"/><rect x="5.9" y="48" width="1.5" height="1.5" fill="#111"/><rect x="25" y="62.5" width="1.5" height="1.5" fill="#111"/><rect x="21.7" y="50.1" width="1.5" height="1.5" fill="#eee"/><rect x="2" y="27.9" width="1.5" height="1.5" fill="#777"/><rect x="2.7" y="2.4" width="1.5" height="1.5" fill="#bbb"/><rect x="53.8" y="4.2" width="1.5" height="1.5" fill="#111"/><rect x="50.1" y="61.1" width="1.5" height="1.5" fill="#ccc"/><rect x="24.3" y="22.8" width="1.5" height="1.5" fill="#ddd"/><rect x="17.6" y="48.7" width="1.5" height="1.5" fill="#ccc"/><rect x="61.9" y="20.2" width="1.5" height="1.5" fill="#bbb"/><rect x="1.6" y="15.9" width="1.5" height="1.5" fill="#eee"/><rect x="47.9" y="31.7" width="1.5" height="1.5" fill="#777"/><rect x="52.9" y="62.1" width="1.5" height="1.5" fill="#eee"/><rect x="8.9" y="33.8" width="1.5" height="1.5" fill="#ddd"/><rect x="53.8" y="50.2" width="1.5" height="1.5" fill="#999"/><rect x="40.7" y="22.3" width="1.5" height="1.5" fill="#ccc"/><rect x="30.9" y="53.3" width="1.5" height="1.5" fill="#bbb"/><rect x="34.3" y="26.6" width="1.5" height="1.5" fill="#999"/><rect x="16.6" y="4.4" width="1.5" height="1.5" fill="#ddd"/><rect x="32.3" y="37" width="1.5" height="1.5" fill="#999"/><rect x="65.7" y="60.1" width="1.5" height="1.5" fill="#bbb"/><rect x="17.7" y="5.7" width="1.5" height="1.5" fill="#bbb"/><rect x="28.2" y="67.2" width="1.5" height="1.5" fill="#eee"/><rect x="11.6" y="9" width="1.5" height="1.5" fill="#eee"/><rect x="41.6" y="45.8" width="1.5" height="1.5" fill="#bbb"/><rect x="52.2" y="20" width="1.5" height="1.5" fill="#222"/><rect x="38" y="25.4" width="1.5" height="1.5" fill="#222"/><rect x="13.3" y="16.8" width="1.5" height="1.5" fill="#111"/><rect x="15.8" y="19.1" width="1.5" height="1.5" fill="#111"/><rect x="21.9" y="26.9" width="1.5" height="1.5" fill="#111"/><rect x="34" y="15.7" width="1.5" height="1.5" fill="#bbb"/><rect x="43.8" y="67.4" width="1.5" height="1.5" fill="#bbb"/><rect x="0.3" y="60" width="1.5" height="1.5" fill="#111"/><rect x="56.3" y="62.2" width="1.5" height="1.5" fill="#ddd"/><rect x="58.8" y="15.8" width="1.5" height="1.5" fill="#ddd"/><rect x="12.7" y="66.2" width="1.5" height="1.5" fill="#111"/><rect x="62.3" y="25.3" width="1.5" height="1.5" fill="#999"/><rect x="30.1" y="17.7" width="1.5" height="1.5" fill="#ddd"/><rect x="7.1" y="40.5" width="1.5" height="1.5" fill="#ccc"/><rect x="14.6" y="25.1" width="1.5" height="1.5" fill="#999"/><rect x="3" y="68" width="1.5" height="1.5" fill="#ddd"/><rect x="40.2" y="44.3" width="1.5" height="1.5" fill="#111"/><rect x="54.6" y="55.7" width="1.5" height="1.5" fill="#777"/><rect x="45.4" y="12.6" width="1.5" height="1.5" fill="#222"/><rect x="5.2" y="2.1" width="1.5" height="1.5" fill="#eee"/><rect x="36.7" y="4.3" width="1.5" height="1.5" fill="#bbb"/><rect x="53.3" y="45.2" width="1.5" height="1.5" fill="#999"/><rect x="42.8" y="6.2" width="1.5" height="1.5" fill="#999"/><rect x="26.7" y="18.4" width="1.5" height="1.5" fill="#222"/><rect x="44.7" y="28.4" width="1.5" height="1.5" fill="#ddd"/><rect x="20.9" y="38.5" width="1.5" height="1.5" fill="#ccc"/><rect x="27.7" y="1.2" width="1.5" height="1.5" fill="#ccc"/><rect x="43.2" y="26.6" width="1.5" height="1.5" fill="#777"/><rect x="13.6" y="0.4" width="1.5" height="1.5" fill="#999"/><rect x="28.4" y="55.8" width="1.5" height="1.5" fill="#777"/><rect x="38.7" y="24.8" width="1.5" height="1.5" fill="#999"/><rect x="8.7" y="3.5" width="1.5" height="1.5" fill="#999"/><rect x="42.9" y="61.9" width="1.5" height="1.5" fill="#bbb"/><rect x="38.4" y="63.1" width="1.5" height="1.5" fill="#999"/><rect x="9.8" y="19.3" width="1.5" height="1.5" fill="#999"/><rect x="62" y="7.4" width="1.5" height="1.5" fill="#eee"/><rect x="50.5" y="53.9" width="1.5" height="1.5" fill="#111"/><rect x="20.2" y="56.9" width="1.5" height="1.5" fill="#ddd"/><rect x="65.4" y="32.8" width="1.5" height="1.5" fill="#ddd"/><rect x="40.7" y="43.3" width="1.5" height="1.5" fill="#bbb"/><rect x="60.6" y="42.2" width="1.5" height="1.5" fill="#999"/><rect x="42.9" y="58.2" width="1.5" height="1.5" fill="#777"/><rect x="41.2" y="13.3" width="1.5" height="1.5" fill="#eee"/><rect x="12.3" y="14.8" width="1.5" height="1.5" fill="#777"/><rect x="62.9" y="10.6" width="1.5" height="1.5" fill="#ccc"/><rect x="8.2" y="16.8" width="1.5" height="1.5" fill="#111"/><rect x="2.8" y="38.2" width="1.5" height="1.5" fill="#ddd"/><rect x="44.7" y="22" width="1.5" height="1.5" fill="#777"/><rect x="40.2" y="37.4" width="1.5" height="1.5" fill="#222"/><rect x="43.5" y="21" width="1.5" height="1.5" fill="#111"/><rect x="28.5" y="44.8" width="1.5" height="1.5" fill="#eee"/><rect x="33.7" y="12.2" width="1.5" height="1.5" fill="#ddd"/><rect x="41.5" y="33.3" width="1.5" height="1.5" fill="#111"/><rect x="29.9" y="42.1" width="1.5" height="1.5" fill="#eee"/><rect x="56" y="55.1" width="1.5" height="1.5" fill="#777"/><rect x="7.2" y="8.7" width="1.5" height="1.5" fill="#777"/><rect x="24.5" y="54.6" width="1.5" height="1.5" fill="#ddd"/><rect x="2.7" y="8.9" width="1.5" height="1.5" fill="#ccc"/><rect x="52.1" y="34.8" width="1.5" height="1.5" fill="#ddd"/><rect x="50.4" y="60.9" width="1.5" height="1.5" fill="#999"/><rect x="1.7" y="4.5" width="1.5" height="1.5" fill="#bbb"/><rect x="13" y="66.8" width="1.5" height="1.5" fill="#eee"/><rect x="19.3" y="55.1" width="1.5" height="1.5" fill="#999"/><rect x="46" y="49" width="1.5" height="1.5" fill="#111"/><rect x="4.4" y="23.9" width="1.5" height="1.5" fill="#222"/><rect x="10.6" y="61" width="1.5" height="1.5" fill="#222"/><rect x="60.6" y="31" width="1.5" height="1.5" fill="#222"/><rect x="33.6" y="62.6" width="1.5" height="1.5" fill="#111"/><rect x="39.7" y="41.9" width="1.5" height="1.5" fill="#111"/><rect x="21.4" y="2.5" width="1.5" height="1.5" fill="#999"/><rect x="27" y="43.3" width="1.5" height="1.5" fill="#222"/><rect x="45.5" y="60.9" width="1.5" height="1.5" fill="#999"/><rect x="53.1" y="18" width="1.5" height="1.5" fill="#ddd"/><rect x="42.6" y="24.5" width="1.5" height="1.5" fill="#eee"/><rect x="37.2" y="39.4" width="1.5" height="1.5" fill="#bbb"/><rect x="16.9" y="36.4" width="1.5" height="1.5" fill="#777"/><rect x="49.4" y="25.3" width="1.5" height="1.5" fill="#777"/><rect x="66.4" y="39.3" width="1.5" height="1.5" fill="#ccc"/><rect x="22.2" y="5.5" width="1.5" height="1.5" fill="#111"/><rect x="11.8" y="50.6" width="1.5" height="1.5" fill="#ddd"/><rect x="19.9" y="35.1" width="1.5" height="1.5" fill="#222"/><rect x="42.8" y="66.9" width="1.5" height="1.5" fill="#ccc"/><rect x="49.1" y="50.8" width="1.5" height="1.5" fill="#111"/><rect x="10" y="41.9" width="1.5" height="1.5" fill="#777"/><rect x="28" y="24.8" width="1.5" height="1.5" fill="#ddd"/><rect x="8.8" y="15.5" width="1.5" height="1.5" fill="#ddd"/><rect x="1.5" y="0.2" width="1.5" height="1.5" fill="#ccc"/><rect x="20.4" y="35.6" width="1.5" height="1.5" fill="#111"/><rect x="27.7" y="20.5" width="1.5" height="1.5" fill="#999"/><rect x="13.7" y="42.4" width="1.5" height="1.5" fill="#eee"/><rect x="10.6" y="1" width="1.5" height="1.5" fill="#111"/><rect x="47.4" y="30.7" width="1.5" height="1.5" fill="#bbb"/><rect x="42.8" y="59.2" width="1.5" height="1.5" fill="#222"/><rect x="26.9" y="18" width="1.5" height="1.5" fill="#ddd"/><rect x="3.8" y="55.8" width="1.5" height="1.5" fill="#ccc"/><rect x="39.8" y="39.3" width="1.5" height="1.5" fill="#eee"/><rect x="16.6" y="61.4" width="1.5" height="1.5" fill="#ddd"/><rect x="4.1" y="1.7" width="1.5" height="1.5" fill="#999"/><rect x="15.9" y="4" width="1.5" height="1.5" fill="#bbb"/><rect x="0.8" y="37.5" width="1.5" height="1.5" fill="#111"/><rect x="9.5" y="13.6" width="1.5" height="1.5" fill="#777"/><rect x="54.5" y="11.9" width="1.5" height="1.5" fill="#222"/><rect x="4.3" y="42.6" width="1.5" height="1.5" fill="#eee"/><rect x="47.9" y="0.4" width="1.5" height="1.5" fill="#777"/><rect x="49.9" y="31.6" width="1.5" height="1.5" fill="#eee"/><rect x="11.8" y="67.8" width="1.5" height="1.5" fill="#222"/><rect x="15.6" y="2.6" width="1.5" height="1.5" fill="#ccc"/><rect x="59.7" y="62.9" width="1.5" height="1.5" fill="#222"/><rect x="47.7" y="18.1" width="1.5" height="1.5" fill="#777"/><rect x="45.9" y="62.4" width="1.5" height="1.5" fill="#222"/><rect x="19.8" y="63.1" width="1.5" height="1.5" fill="#111"/><rect x="5.7" y="34.5" width="1.5" height="1.5" fill="#999"/><rect x="17.4" y="16.1" width="1.5" height="1.5" fill="#111"/><rect x="63.3" y="50.7" width="1.5" height="1.5" fill="#ccc"/><rect x="12.9" y="26.4" width="1.5" height="1.5" fill="#111"/><rect x="25.4" y="57.9" width="1.5" height="1.5" fill="#eee"/><rect x="31.6" y="36.1" width="1.5" height="1.5" fill="#ddd"/><rect x="57.5" y="29.7" width="1.5" height="1.5" fill="#111"/><rect x="38.2" y="20.9" width="1.5" height="1.5" fill="#111"/><rect x="26.2" y="39.8" width="1.5" height="1.5" fill="#999"/><rect x="9.7" y="1.8" width="1.5" height="1.5" fill="#bbb"/><rect x="41.7" y="11" width="1.5" height="1.5" fill="#999"/><rect x="46.9" y="2.1" width="1.5" height="1.5" fill="#999"/><rect x="46.4" y="43.1" width="1.5" height="1.5" fill="#bbb"/><rect x="49.4" y="4.5" width="1.5" height="1.5" fill="#ccc"/><rect x="13.4" y="64.9" width="1.5" height="1.5" fill="#bbb"/><rect x="58.9" y="51.4" width="1.5" height="1.5" fill="#777"/><rect x="7.2" y="14" width="1.5" height="1.5" fill="#bbb"/><rect x="2.3" y="64.5" width="1.5" height="1.5" fill="#bbb"/><rect x="55.3" y="42.9" width="1.5" height="1.5" fill="#222"/><rect x="32" y="9" width="1.5" height="1.5" fill="#111"/><rect x="19.7" y="22.9" width="1.5" height="1.5" fill="#222"/><rect x="1.4" y="17.5" width="1.5" height="1.5" fill="#222"/><rect x="3.2" y="51.7" width="1.5" height="1.5" fill="#ccc"/><rect x="51.5" y="40.9" width="1.5" height="1.5" fill="#eee"/><rect x="57" y="42" width="1.5" height="1.5" fill="#ddd"/><rect x="52.9" y="2.1" width="1.5" height="1.5" fill="#bbb"/><rect x="23.2" y="47.9" width="1.5" height="1.5" fill="#111"/><rect x="47.9" y="56.3" width="1.5" height="1.5" fill="#222"/><rect x="11.4" y="0.1" width="1.5" height="1.5" fill="#111"/><rect x="19.3" y="51" width="1.5" height="1.5" fill="#ddd"/><rect x="0.3" y="33.4" width="1.5" height="1.5" fill="#eee"/><rect x="46.6" y="56.1" width="1.5" height="1.5" fill="#eee"/><rect x="39.7" y="65.1" width="1.5" height="1.5" fill="#222"/><rect x="38.7" y="10.8" width="1.5" height="1.5" fill="#111"/><rect x="62.9" y="15.7" width="1.5" height="1.5" fill="#999"/><rect x="7.4" y="43.3" width="1.5" height="1.5" fill="#bbb"/><rect x="32.8" y="67.4" width="1.5" height="1.5" fill="#bbb"/><rect x="42.1" y="24.2" width="1.5" height="1.5" fill="#777"/><rect x="62.2" y="60.6" width="1.5" height="1.5" fill="#bbb"/><rect x="28.3" y="43.9" width="1.5" height="1.5" fill="#ccc"/><rect x="13.8" y="17.9" width="1.5" height="1.5" fill="#999"/><rect x="25.4" y="60.1" width="1.5" height="1.5" fill="#111"/><rect x="63.2" y="8.6" width="1.5" height="1.5" fill="#ddd"/><rect x="23.3" y="22.2" width="1.5" height="1.5" fill="#999"/><rect x="58.2" y="30.6" width="1.5" height="1.5" fill="#ccc"/><rect x="11.4" y="29.8" width="1.5" height="1.5" fill="#222"/><rect x="38.8" y="8.6" width="1.5" height="1.5" fill="#eee"/><rect x="43.1" y="47.4" width="1.5" height="1.5" fill="#111"/><rect x="17.9" y="51.3" width="1.5" height="1.5" fill="#999"/><rect x="48.5" y="66.3" width="1.5" height="1.5" fill="#ccc"/><rect x="40.4" y="23.7" width="1.5" height="1.5" fill="#111"/><rect x="22" y="12.9" width="1.5" height="1.5" fill="#bbb"/><rect x="11" y="44.7" width="1.5" height="1.5" fill="#111"/><rect x="25.7" y="66.9" width="1.5" height="1.5" fill="#222"/><rect x="49.1" y="29.6" width="1.5" height="1.5" fill="#111"/><rect x="7.3" y="62" width="1.5" height="1.5" fill="#222"/><rect x="13.8" y="26.4" width="1.5" height="1.5" fill="#ddd"/><rect x="0.8" y="58.1" width="1.5" height="1.5" fill="#777"/><rect x="46.5" y="34" width="1.5" height="1.5" fill="#222"/><rect x="31" y="9.6" width="1.5" height="1.5" fill="#777"/><rect x="0.4" y="16.5" width="1.5" height="1.5" fill="#777"/><rect x="47" y="39.9" width="1.5" height="1.5" fill="#777"/><rect x="56.7" y="45.4" width="1.5" height="1.5" fill="#111"/><rect x="45.5" y="43.6" width="1.5" height="1.5" fill="#eee"/><rect x="29" y="17.7" width="1.5" height="1.5" fill="#bbb"/><rect x="59.9" y="16.5" width="1.5" height="1.5" fill="#777"/><rect x="47.8" y="42.8" width="1.5" height="1.5" fill="#222"/><rect x="56.9" y="32.8" width="1.5" height="1.5" fill="#ddd"/><rect x="41.6" y="27.8" width="1.5" height="1.5" fill="#999"/><rect x="59.9" y="22.3" width="1.5" height="1.5" fill="#ddd"/><rect x="26" y="33.3" width="1.5" height="1.5" fill="#bbb"/><rect x="2.6" y="36.9" width="1.5" height="1.5" fill="#999"/><rect x="48" y="64.7" width="1.5" height="1.5" fill="#111"/><rect x="34.8" y="6.9" width="1.5" height="1.5" fill="#eee"/><rect x="36.2" y="48.8" width="1.5" height="1.5" fill="#ddd"/><rect x="42.8" y="56.4" width="1.5" height="1.5" fill="#ccc"/><rect x="27.5" y="64.5" width="1.5" height="1.5" fill="#111"/><rect x="66.3" y="12.5" width="1.5" height="1.5" fill="#bbb"/><rect x="48.9" y="41.8" width="1.5" height="1.5" fill="#ddd"/><rect x="16.9" y="26" width="1.5" height="1.5" fill="#ddd"/><rect x="0.9" y="28.5" width="1.5" height="1.5" fill="#777"/><rect x="42.1" y="45.9" width="1.5" height="1.5" fill="#222"/><rect x="7.3" y="20.6" width="1.5" height="1.5" fill="#777"/><rect x="63" y="35.8" width="1.5" height="1.5" fill="#111"/><rect x="66.6" y="65.3" width="1.5" height="1.5" fill="#eee"/><rect x="14.2" y="8.8" width="1.5" height="1.5" fill="#bbb"/><rect x="54.2" y="43.1" width="1.5" height="1.5" fill="#eee"/><rect x="43" y="49" width="1.5" height="1.5" fill="#999"/><rect x="23.7" y="43.4" width="1.5" height="1.5" fill="#777"/><rect x="31.4" y="20" width="1.5" height="1.5" fill="#999"/><rect x="52.2" y="31.9" width="1.5" height="1.5" fill="#111"/><rect x="17.9" y="25.6" width="1.5" height="1.5" fill="#222"/><rect x="65.9" y="46.2" width="1.5" height="1.5" fill="#eee"/><rect x="0.2" y="49.1" width="1.5" height="1.5" fill="#222"/><rect x="24" y="44.5" width="1.5" height="1.5" fill="#ccc"/><rect x="32.1" y="29.1" width="1.5" height="1.5" fill="#bbb"/><rect x="44.2" y="24.6" width="1.5" height="1.5" fill="#222"/><rect x="57.2" y="3.9" width="1.5" height="1.5" fill="#ccc"/><rect x="52.5" y="9.5" width="1.5" height="1.5" fill="#ccc"/><rect x="42.4" y="1" width="1.5" height="1.5" fill="#ddd"/><rect x="14.1" y="4.9" width="1.5" height="1.5" fill="#222"/><rect x="16.8" y="6.9" width="1.5" height="1.5" fill="#999"/><rect x="57.2" y="12.6" width="1.5" height="1.5" fill="#eee"/><rect x="23.2" y="10.4" width="1.5" height="1.5" fill="#777"/><rect x="53" y="11.4" width="1.5" height="1.5" fill="#bbb"/><rect x="44.8" y="60.8" width="1.5" height="1.5" fill="#222"/><rect x="13.2" y="47.1" width="1.5" height="1.5" fill="#bbb"/><rect x="49.7" y="29.8" width="1.5" height="1.5" fill="#bbb"/><rect x="37.2" y="18" width="1.5" height="1.5" fill="#111"/><rect x="55.4" y="32.2" width="1.5" height="1.5" fill="#ddd"/><rect x="32.5" y="61.6" width="1.5" height="1.5" fill="#eee"/><rect x="16.5" y="11.2" width="1.5" height="1.5" fill="#ddd"/><rect x="10.7" y="21.8" width="1.5" height="1.5" fill="#eee"/><rect x="44.6" y="57.2" width="1.5" height="1.5" fill="#ccc"/><rect x="28.5" y="68" width="1.5" height="1.5" fill="#bbb"/><rect x="12.1" y="24.5" width="1.5" height="1.5" fill="#ddd"/><rect x="1.4" y="3.1" width="1.5" height="1.5" fill="#ccc"/><rect x="54.2" y="6.4" width="1.5" height="1.5" fill="#eee"/><rect x="32.5" y="61" width="1.5" height="1.5" fill="#ddd"/><rect x="14.3" y="28.3" width="1.5" height="1.5" fill="#999"/><rect x="22.7" y="58.6" width="1.5" height="1.5" fill="#ccc"/><rect x="22.9" y="52.9" width="1.5" height="1.5" fill="#111"/><rect x="19" y="23.3" width="1.5" height="1.5" fill="#222"/><rect x="37.1" y="56.2" width="1.5" height="1.5" fill="#222"/><rect x="23.8" y="33.6" width="1.5" height="1.5" fill="#ccc"/><rect x="33.8" y="18.5" width="1.5" height="1.5" fill="#ccc"/><rect x="65.3" y="44.5" width="1.5" height="1.5" fill="#bbb"/><rect x="22.2" y="21.6" width="1.5" height="1.5" fill="#222"/><rect x="8.5" y="66.1" width="1.5" height="1.5" fill="#bbb"/><rect x="52.5" y="2.7" width="1.5" height="1.5" fill="#777"/><rect x="36.5" y="3.4" width="1.5" height="1.5" fill="#222"/><rect x="7.3" y="3.2" width="1.5" height="1.5" fill="#eee"/><rect x="40.8" y="44.7" width="1.5" height="1.5" fill="#777"/><rect x="41.3" y="42.6" width="1.5" height="1.5" fill="#bbb"/><rect x="14.2" y="45.4" width="1.5" height="1.5" fill="#eee"/><rect x="41.9" y="11.8" width="1.5" height="1.5" fill="#999"/><rect x="58.2" y="28.7" width="1.5" height="1.5" fill="#bbb"/><rect x="61.2" y="44.6" width="1.5" height="1.5" fill="#ccc"/><rect x="58.4" y="9.4" width="1.5" height="1.5" fill="#222"/><rect x="37.7" y="17.5" width="1.5" height="1.5" fill="#222"/><rect x="12.4" y="2.3" width="1.5" height="1.5" fill="#ddd"/><rect x="28.9" y="43.6" width="1.5" height="1.5" fill="#ddd"/><rect x="33.4" y="35.5" width="1.5" height="1.5" fill="#bbb"/><rect x="51.8" y="28.6" width="1.5" height="1.5" fill="#777"/><rect x="29.9" y="1" width="1.5" height="1.5" fill="#777"/><rect x="39.8" y="67.5" width="1.5" height="1.5" fill="#999"/><rect x="31.9" y="28" width="1.5" height="1.5" fill="#bbb"/><rect x="5.6" y="32.1" width="1.5" height="1.5" fill="#999"/><rect x="42" y="29" width="1.5" height="1.5" fill="#ddd"/><rect x="45.8" y="8.3" width="1.5" height="1.5" fill="#bbb"/><rect x="14.6" y="8.3" width="1.5" height="1.5" fill="#eee"/><rect x="1.2" y="48.9" width="1.5" height="1.5" fill="#111"/><rect x="30.2" y="50.6" width="1.5" height="1.5" fill="#ddd"/><rect x="24.5" y="50.8" width="1.5" height="1.5" fill="#999"/><rect x="48.9" y="5.7" width="1.5" height="1.5" fill="#eee"/><rect x="30.9" y="63.4" width="1.5" height="1.5" fill="#222"/><rect x="61.2" y="3.6" width="1.5" height="1.5" fill="#ddd"/><rect x="0.8" y="1" width="1.5" height="1.5" fill="#bbb"/><rect x="26.1" y="21.2" width="1.5" height="1.5" fill="#999"/><rect x="64.2" y="56.8" width="1.5" height="1.5" fill="#ddd"/><rect x="21.2" y="64.5" width="1.5" height="1.5" fill="#eee"/><rect x="31.5" y="11.3" width="1.5" height="1.5" fill="#bbb"/><rect x="24.3" y="43.9" width="1.5" height="1.5" fill="#777"/><rect x="32" y="52.9" width="1.5" height="1.5" fill="#eee"/><rect x="63.3" y="53.4" width="1.5" height="1.5" fill="#ccc"/><rect x="19.6" y="4.1" width="1.5" height="1.5" fill="#ccc"/><rect x="58.3" y="49.3" width="1.5" height="1.5" fill="#ddd"/><rect x="55.7" y="40.9" width="1.5" height="1.5" fill="#222"/><rect x="39.2" y="66.4" width="1.5" height="1.5" fill="#111"/><rect x="25.2" y="46.6" width="1.5" height="1.5" fill="#111"/><rect x="54.1" y="19.3" width="1.5" height="1.5" fill="#ddd"/><rect x="21.5" y="18.2" width="1.5" height="1.5" fill="#999"/><rect x="39.3" y="55.5" width="1.5" height="1.5" fill="#ddd"/><rect x="19.3" y="9.6" width="1.5" height="1.5" fill="#999"/><rect x="18.3" y="57.9" width="1.5" height="1.5" fill="#eee"/><rect x="23.2" y="5.8" width="1.5" height="1.5" fill="#eee"/><rect x="53.4" y="13.6" width="1.5" height="1.5" fill="#111"/><rect x="20.7" y="3.9" width="1.5" height="1.5" fill="#777"/><rect x="31.2" y="14" width="1.5" height="1.5" fill="#222"/><rect x="39.3" y="0.6" width="1.5" height="1.5" fill="#777"/><rect x="30.8" y="6" width="1.5" height="1.5" fill="#ccc"/><rect x="51.7" y="15.8" width="1.5" height="1.5" fill="#222"/><rect x="59.3" y="35.5" width="1.5" height="1.5" fill="#eee"/><rect x="33.9" y="13.7" width="1.5" height="1.5" fill="#111"/><rect x="12.9" y="12.3" width="1.5" height="1.5" fill="#222"/><rect x="24.3" y="38.4" width="1.5" height="1.5" fill="#777"/><rect x="52.2" y="58.3" width="1.5" height="1.5" fill="#111"/><rect x="3" y="67.8" width="1.5" height="1.5" fill="#ccc"/><rect x="58" y="25.3" width="1.5" height="1.5" fill="#eee"/><rect x="52.8" y="10.6" width="1.5" height="1.5" fill="#ddd"/><rect x="23.1" y="35.3" width="1.5" height="1.5" fill="#ddd"/><rect x="6.3" y="13.9" width="1.5" height="1.5" fill="#eee"/><rect x="39.3" y="14.5" width="1.5" height="1.5" fill="#222"/><rect x="28.5" y="64.4" width="1.5" height="1.5" fill="#999"/><rect x="17" y="2.6" width="1.5" height="1.5" fill="#111"/><rect x="66.6" y="25.7" width="1.5" height="1.5" fill="#ddd"/><rect x="3.4" y="37.9" width="1.5" height="1.5" fill="#eee"/><rect x="32.6" y="57.5" width="1.5" height="1.5" fill="#bbb"/><rect x="57.8" y="43.5" width="1.5" height="1.5" fill="#bbb"/><rect x="47.3" y="6.1" width="1.5" height="1.5" fill="#ccc"/><rect x="37.8" y="43.6" width="1.5" height="1.5" fill="#777"/><rect x="12.2" y="57.8" width="1.5" height="1.5" fill="#ccc"/><rect x="64.7" y="67.4" width="1.5" height="1.5" fill="#111"/><rect x="11.5" y="64" width="1.5" height="1.5" fill="#ccc"/><rect x="4" y="37.6" width="1.5" height="1.5" fill="#ddd"/><rect x="56.1" y="3.2" width="1.5" height="1.5" fill="#eee"/><rect x="3.7" y="9.8" width="1.5" height="1.5" fill="#ddd"/><rect x="62.9" y="46" width="1.5" height="1.5" fill="#222"/><rect x="39.5" y="30" width="1.5" height="1.5" fill="#bbb"/><rect x="31.5" y="25.3" width="1.5" height="1.5" fill="#777"/><rect x="8.3" y="32.7" width="1.5" height="1.5" fill="#999"/><rect x="29.6" y="54.9" width="1.5" height="1.5" fill="#ddd"/><rect x="31.3" y="62.1" width="1.5" height="1.5" fill="#ddd"/><rect x="10.5" y="56.6" width="1.5" height="1.5" fill="#bbb"/><rect x="62.6" y="58.9" width="1.5" height="1.5" fill="#999"/></svg><svg class="a" style="left:213px;top:322px" width="67" height="68" viewBox="0 0 67 68"><rect width="67" height="68" filter="url(#n11)"/></svg><svg class="a" style="left:284px;top:322px" width="67" height="68" viewBox="0 0 67 68"><rect width="67" height="68" fill="url(#p12)"/></svg><div class="a" style="left:282px;top:248px;width:71px;height:72px;border:2px solid #4d6473"></div>
  <!-- grid scrollbar -->
  <div class="a" style="left:574px;top:175px;width:15px;height:266px;background:#3d3d3d"></div>
  <div class="a sb" style="left:574px;top:175px;width:15px;height:16px"></div>
  <svg class="a" style="left:577px;top:179px" width="10" height="6"><path d="M0.5 5.5H9.5L5 1z" fill="#bdbdbd"/></svg>
  <div class="a" style="left:575px;top:192px;width:14px;height:233px;border:1px solid #575757;background:#404040"></div>
  <div class="a sb" style="left:574px;top:427px;width:15px;height:14px"></div>
  <svg class="a" style="left:577px;top:431px" width="10" height="6"><path d="M0.5 0.5H9.5L5 5z" fill="#bdbdbd"/></svg>
  <!-- splitter dots -->
  <svg class="a" style="left:593px;top:302px" width="3" height="20"><g fill="#a8a8a8"><rect y="0" width="2" height="1.6"/><rect y="3.4" width="2" height="1.6"/><rect y="6.8" width="2" height="1.6"/><rect y="10.2" width="2" height="1.6"/><rect y="13.6" width="2" height="1.6"/><rect y="17" width="2" height="1.6"/></g></svg>
  <svg class="a" style="left:596px;top:176px" width="162" height="250"><rect width="162" height="250" filter="url(#mp)"/><rect width="162" height="250" filter="url(#mc)" opacity="0.4"/><g filter="url(#blur1)" fill="#0c4a40"><path d="M0 0H128L125 2 113 6 101 14 86 20 76 26 66 20 53 14 45 8 35 15 18 16 10 12 0 6Z" fill="#0f6e5e" opacity="0.5"/><path d="M0 3L10 12 18 16 35 15 45 8 53 14 66 20 76 26 86 20 101 14 113 6 125 2 130 0" fill="none" stroke="#0a3833" stroke-width="4" stroke-linejoin="round" opacity="0.85"/><ellipse cx="104" cy="90" rx="9" ry="8" opacity="0.85"/><ellipse cx="26" cy="54" rx="3" ry="3" opacity="0.7"/><ellipse cx="58" cy="98" rx="6" ry="2.5" opacity="0.7"/><ellipse cx="96" cy="64" rx="5" ry="2" opacity="0.7"/><path d="M112 168L150 140L151 143L115 171Z" opacity="0.7"/><path d="M4 206C12 200 18 214 14 230 10 236 6 240 0 238V208Z" fill="#127563" opacity="0.7"/></g></svg>
  <!-- preview vscroll -->
  <div class="a" style="left:758px;top:176px;width:15px;height:250px;background:#3d3d3d"></div>
  <div class="a sb" style="left:758px;top:176px;width:15px;height:15px"></div>
  <svg class="a" style="left:761px;top:180px" width="10" height="6"><path d="M0.5 5.5H9.5L5 1z" fill="#bdbdbd"/></svg>
  <div class="a" style="left:759px;top:191px;width:13px;height:51px;border:1px solid #575757;background:#454545"></div>
  <div class="a sb" style="left:758px;top:411px;width:15px;height:14px"></div>
  <svg class="a" style="left:761px;top:415px" width="10" height="6"><path d="M0.5 0.5H9.5L5 5z" fill="#bdbdbd"/></svg>
  <!-- preview hscroll -->
  <div class="a" style="left:596px;top:427px;width:162px;height:14px;background:#3d3d3d"></div>
  <div class="a sb" style="left:596px;top:427px;width:14px;height:14px"></div>
  <svg class="a" style="left:600px;top:429px" width="6" height="10"><path d="M5.5 0.5V9.5L1 5z" fill="#bdbdbd"/></svg>
  <div class="a" style="left:611px;top:427px;width:30px;height:14px;border:1px solid #575757;background:#454545"></div>
  <div class="a sb" style="left:742px;top:427px;width:14px;height:14px"></div>
  <svg class="a" style="left:747px;top:429px" width="6" height="10"><path d="M0.5 0.5V9.5L5 5z" fill="#bdbdbd"/></svg>
  <div class="a" style="left:758px;top:427px;width:15px;height:14px;border:1px solid #505050;background:#3d3d3d"></div>

  <!-- search -->
  <div class="a" style="left:211px;top:442px;width:563px;height:27px;background:#3a3a3a;border-top:2px solid #333"></div>
  <div class="a t" style="left:213px;top:448px;font-size:14.8px;color:#9a9a9a">Search</div>
  <div class="a btn" style="left:211px;top:471px;width:139px;height:25px"></div>
  <div class="a btn" style="left:352px;top:471px;width:139px;height:25px"></div>

  <svg class="a" style="left:272px;top:475px" width="16" height="16"><path fill-rule="evenodd" fill="#d0d0d0" d="M1.3 1.2H7.5L9.5 3.3H14.8V14.8H1.3ZM3 6.8V13.2H13.2V6.8Z"/></svg>
  <svg class="a" style="left:415px;top:475px" width="13" height="16"><path d="M2.8 4.8V14.2H10.8V4.8" fill="none" stroke="#d0d0d0" stroke-width="1.5"/><path d="M0.7 4.4H12.3" stroke="#d0d0d0" stroke-width="1.4"/><rect x="4" y="1" width="5.5" height="2.6" rx="0.8" fill="#d0d0d0"/><path d="M6.8 6.5V12.5" stroke="#777" stroke-width="0.8"/></svg>
  <!-- bottom buttons -->
  <div class="a btn" style="left:612px;top:527px;width:87px;height:25px"></div>
  <div class="a t" style="left:632px;top:531px;font-size:15.3px"><u>C</u>ancel</div>
  <div class="a" style="left:705.5px;top:525px;width:93px;height:27px;border-radius:4px;background:#3f4549"></div>
  <div class="a btn" style="left:707.5px;top:527px;width:89px;height:24px;border-color:#5a6872;background:linear-gradient(#4b4f52,#45494c)"></div>
  <div class="a t" style="left:741px;top:531px"><u>O</u>K</div>
</div>
</body></html>
